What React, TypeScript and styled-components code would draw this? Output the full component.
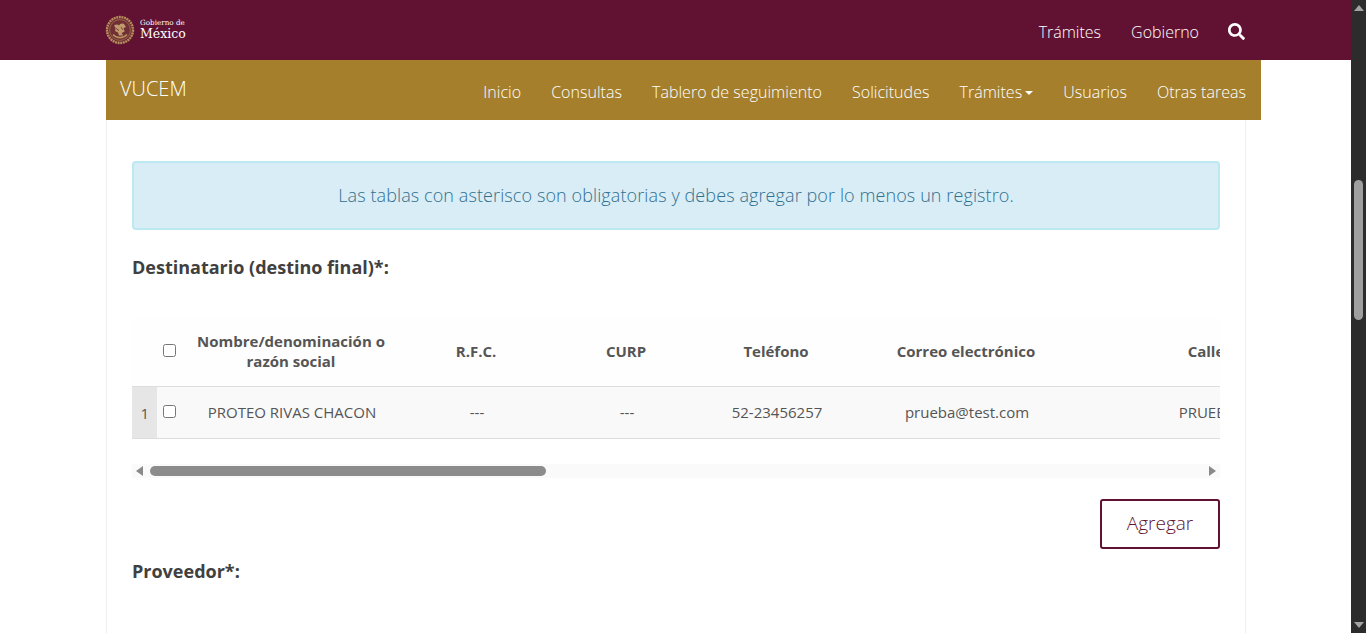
import React from 'react';
import styled, { createGlobalStyle } from 'styled-components';
import { FaSearch } from 'react-icons/fa';

const Global = createGlobalStyle`
  html, body {
    margin: 0;
    height: 100%;
    overflow: hidden;
    background: #fff;
    font-family: "Open Sans", "Noto Sans", sans-serif;
    color: #333;
  }
  * { box-sizing: border-box; }
`;

const Shell = styled.div`
  display: flex;
  width: 1366px;
  height: 633px;
  overflow: hidden;
`;

const Page = styled.div`
  width: 1351px;
  height: 633px;
  overflow: hidden;
`;

const Scrollbar = styled.div`
  width: 15px;
  height: 633px;
  background: #2c2c2c;
  display: flex;
  flex-direction: column;
  align-items: center;
  justify-content: space-between;
  padding: 5px 0;
  position: relative;
`;

const Thumb = styled.div`
  position: absolute;
  top: 180px;
  left: 3px;
  width: 9px;
  height: 140px;
  border-radius: 5px;
  background: #9f9f9f;
`;

const ScrollArrow = styled.div<{ $down?: boolean }>`
  width: 0;
  height: 0;
  border-left: 5px solid transparent;
  border-right: 5px solid transparent;
  ${p => (p.$down ? 'border-top: 6px solid #a3a3a3;' : 'border-bottom: 6px solid #a3a3a3;')}
`;

const TopBar = styled.header`
  height: 60px;
  background: #611232;
  padding: 0 106px 0 105px;
  display: flex;
  align-items: center;
  justify-content: space-between;
`;

const Logo = styled.div`
  display: flex;
  align-items: center;
  gap: 5px;
  color: #fff;
`;

const LogoWords = styled.div`
  display: flex;
  flex-direction: column;
  gap: 2px;
  font-family: "DejaVu Serif", serif;
  line-height: 1;
`;

const LogoSmall = styled.span`
  font-size: 7.2px;
`;

const LogoBig = styled.span`
  font-size: 12.5px;
`;

const TopLinks = styled.nav`
  display: flex;
  align-items: center;
  gap: 30px;
  color: #fff;
  font-size: 16px;
  font-weight: 300;
  margin-top: 4px;
`;

const SearchIcon = styled(FaSearch)`
  width: 17px;
  height: 17px;
  margin-top: -2px;
  margin-left: -1px;
`;

const GoldBar = styled.div`
  width: 1155px;
  height: 60px;
  margin-left: 106px;
  background: #a57f2c;
  color: #fff;
  display: flex;
  justify-content: space-between;
  padding: 0 15px 0 14px;
`;

const Brand = styled.div`
  font-size: 20px;
  font-weight: 300;
  line-height: 58px;
`;

const GoldLinks = styled.nav`
  display: flex;
  gap: 30px;
  font-size: 16px;
  font-weight: 300;
  letter-spacing: 0.03px;
  line-height: 64px;
  padding-top: 3px;
`;

const GoldLink = styled.span`
  display: flex;
  align-items: center;
`;

const Caret = styled.span`
  width: 0;
  height: 0;
  margin-left: 3px;
  margin-top: 2px;
  border-left: 4px solid transparent;
  border-right: 4px solid transparent;
  border-top: 4px solid #fff;
`;

const Content = styled.main`
  width: 1140px;
  height: 513px;
  margin-left: 106px;
  padding: 41px 25px 0 25px;
  background: #fff;
  border-left: 1px solid #eee;
  border-right: 1px solid #eee;
`;

const Alert = styled.div`
  height: 69px;
  background: #d9edf7;
  border: 2px solid #bce8f1;
  border-radius: 4px;
  color: #31708f;
  font-size: 18px;
  font-weight: 300;
  letter-spacing: 0.1px;
  text-align: center;
  line-height: 65px;
`;

const SectionTitle = styled.h4<{ $top: number }>`
  margin: ${p => p.$top}px 0 0;
  font-size: 18px;
  font-weight: 700;
  color: #404041;
  line-height: 22px;
`;

const TableArea = styled.div`
  margin-top: 39px;
  width: 1088px;
  overflow: hidden;
`;

const Row = styled.div<{ $head?: boolean }>`
  display: grid;
  grid-template-columns: 25px 26px 218px 150px 150px 150px 230px 250px;
  width: max-content;
  height: ${p => (p.$head ? '70px' : '52px')};
  padding-bottom: 2px;
  align-items: center;
  font-size: 15px;
  text-align: center;
  white-space: nowrap;
  background: ${p => (p.$head ? '#fefefe' : '#f9f9f9')};
  font-weight: ${p => (p.$head ? 700 : 400)};
  color: #555;
  border-bottom: 1px solid #ddd;
`;

const RowNum = styled.div`
  background: #e6e6e6;
  height: 51px;
  margin-bottom: -2px;
  display: flex;
  align-items: center;
  justify-content: flex-end;
  padding-right: 8px;
  font-size: 15px;
`;

const Check = styled.input<{ $head?: boolean }>`
  width: 13px;
  height: 13px;
  margin: 0 0 ${p => (p.$head ? 0 : 1)}px 6px;
  display: block;
`;

const Wrap = styled.span`
  display: block;
  white-space: normal;
  line-height: 20px;
  padding-right: 2px;
`;

const Cell = styled.div`
  padding-left: 2px;
`;

const HScroll = styled.div`
  margin-top: 25px;
  height: 14px;
  background: #fafafa;
  display: flex;
  align-items: center;
  justify-content: space-between;
  padding: 0 4px 0 4px;
  position: relative;
`;

const HArrow = styled.div<{ $right?: boolean }>`
  width: 0;
  height: 0;
  border-top: 5px solid transparent;
  border-bottom: 5px solid transparent;
  ${p => (p.$right ? 'border-left: 7px solid #8a8a8a;' : 'border-right: 7px solid #8a8a8a;')}
`;

const HThumb = styled.div`
  position: absolute;
  left: 18px;
  top: 2px;
  width: 396px;
  height: 10px;
  border-radius: 5px;
  background: #8c8c8c;
`;

const Actions = styled.div`
  display: flex;
  justify-content: flex-end;
  margin-top: 21px;
`;

const AddButton = styled.button`
  width: 120px;
  height: 50px;
  padding: 0 0 2px;
  background: #fff;
  border: 2px solid #611232;
  border-radius: 3px;
  color: #611232;
  font-family: inherit;
  font-size: 19px;
  font-weight: 300;
`;

const columns = ['R.F.C.', 'CURP', 'Teléfono', 'Correo electrónico', 'Calle'];
const values = ['---', '---', '52-23456257', 'prueba@test.com', 'PRUEBA'];
const goldLinks = ['Inicio', 'Consultas', 'Tablero de seguimiento', 'Solicitudes'];

const Seal = () => (
  <svg width="30" height="30" viewBox="0 0 30 30">
    <circle cx="15" cy="15" r="14" fill="#6f2f35" />
    <circle cx="15" cy="15" r="13" fill="none" stroke="#b98f5f" strokeWidth="2.4" strokeDasharray="1.8 0.8" />
    <circle cx="15" cy="15" r="10.4" fill="none" stroke="#a9794f" strokeWidth="0.7" />
    <path d="M9 10.5c2-1.5 4-1.5 5 0 .8-2 3-2.6 5-1.6l2 3-2.4 1 1 3.6-3 1.5 1.6 2.6H14l-1-3-3-1.6.6-3z" fill="#c09a6c" />
    <path d="M8 19.5c3.6 4.2 10.4 4.2 14 0" fill="none" stroke="#b98f5f" strokeWidth="1.6" />
    <path d="M11 13.5l3 2M16 12l2 3" stroke="#6f2f35" strokeWidth="0.8" />
  </svg>
);

export default function App() {
  return (
    <Shell>
      <Global />
      <Page>
        <TopBar>
          <Logo>
            <Seal />
            <LogoWords>
              <LogoSmall>Gobierno de</LogoSmall>
              <LogoBig>México</LogoBig>
            </LogoWords>
          </Logo>
          <TopLinks>
            <span>Trámites</span>
            <span>Gobierno</span>
            <SearchIcon />
          </TopLinks>
        </TopBar>
        <GoldBar>
          <Brand>VUCEM</Brand>
          <GoldLinks>
            {goldLinks.map(l => (
              <GoldLink key={l}>{l}</GoldLink>
            ))}
            <GoldLink>
              Trámites
              <Caret />
            </GoldLink>
            <GoldLink>Usuarios</GoldLink>
            <GoldLink>Otras tareas</GoldLink>
          </GoldLinks>
        </GoldBar>
        <Content>
          <Alert>Las tablas con asterisco son obligatorias y debes agregar por lo menos un registro.</Alert>
          <SectionTitle $top={26}>Destinatario (destino final)*:</SectionTitle>
          <TableArea>
            <Row $head>
              <div />
              <Check $head type="checkbox" />
              <Wrap>Nombre/denominación o razón social</Wrap>
              {columns.map(c => (
                <div key={c}>{c}</div>
              ))}
            </Row>
            <Row>
              <RowNum>1</RowNum>
              <Check type="checkbox" />
              <div>PROTEO RIVAS CHACON</div>
              {values.map((v, i) => (
                <Cell key={i}>{v}</Cell>
              ))}
            </Row>
          </TableArea>
          <HScroll>
            <HArrow />
            <HThumb />
            <HArrow $right />
          </HScroll>
          <Actions>
            <AddButton>Agregar</AddButton>
          </Actions>
          <SectionTitle $top={11}>Proveedor*:</SectionTitle>
        </Content>
      </Page>
      <Scrollbar>
        <ScrollArrow />
        <Thumb />
        <ScrollArrow $down />
      </Scrollbar>
    </Shell>
  );
}
